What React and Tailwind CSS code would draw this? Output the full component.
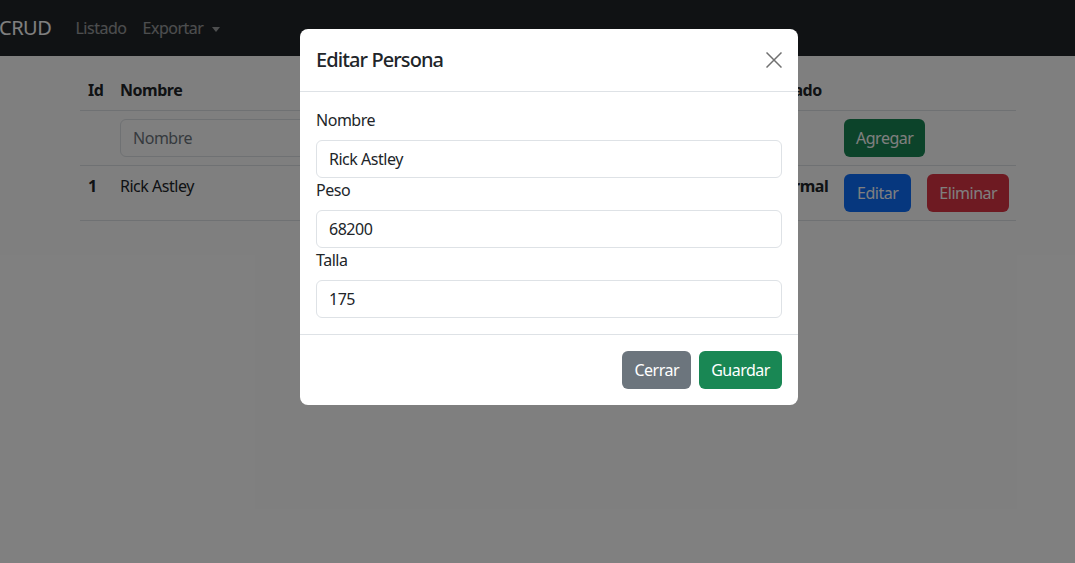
import React from "react";

const font = { fontFamily: '"Noto Sans", "Open Sans", sans-serif', letterSpacing: "-0.03em" };

const Field = ({ label, value }) => (
  <div>
    <label className="block mb-2 leading-6 text-[16px] text-[#212529]">{label}</label>
    <input
      readOnly
      value={value}
      className="block w-full h-[38px] px-3 rounded-md border border-[#dee2e6] text-[16px] text-[#212529] bg-white outline-none"
    />
  </div>
);

export default function App() {
  return (
    <div className="relative w-[1075px] h-[563px] overflow-hidden bg-white text-[#212529]" style={font}>
      {/* Navbar */}
      <nav className="h-14 bg-[#212529] flex items-center">
        <span className="text-[20px] text-white leading-[30px] mr-6 -ml-[1px]">CRUD</span>
        <div className="flex items-center gap-4 text-[16px] text-white/55">
          <span>Listado</span>
          <span className="flex items-center gap-2">
            Exportar
            <span className="w-0 h-0 border-x-[4px] border-x-transparent border-t-[5px] border-t-white/55 mt-[2px]" />
          </span>
        </div>
      </nav>

      {/* Table */}
      <div className="pl-20 pr-[59px] pt-[14px]">
        <table className="w-full table-fixed border-collapse text-[16px]">
          <colgroup>
            <col className="w-[32px]" />
            <col className="w-[240px]" />
            <col className="w-[160px]" />
            <col className="w-[160px]" />
            <col className="w-[91px]" />
            <col className="w-[73px]" />
            <col />
          </colgroup>
          <thead>
            <tr className="border-b border-[#dee2e6] text-left align-top">
              <th className="p-2 font-bold">Id</th>
              <th className="p-2 font-bold">Nombre</th>
              <th className="p-2 font-bold">Peso</th>
              <th className="p-2 font-bold">Talla</th>
              <th className="p-2 font-bold">IMC</th>
              <th className="p-2 font-bold">Estado</th>
              <th className="p-2"></th>
            </tr>
          </thead>
          <tbody>
            <tr className="border-b border-[#dee2e6] align-top">
              <td className="p-2"></td>
              <td className="p-2">
                <input
                  readOnly
                  placeholder="Nombre"
                  className="w-full h-[38px] px-3 rounded-md border border-[#dee2e6] placeholder:text-[#6c757d] outline-none"
                />
              </td>
              <td className="p-2">
                <input readOnly placeholder="Peso" className="w-full h-[38px] px-3 rounded-md border border-[#dee2e6] outline-none" />
              </td>
              <td className="p-2">
                <input readOnly placeholder="Talla" className="w-full h-[38px] px-3 rounded-md border border-[#dee2e6] outline-none" />
              </td>
              <td className="p-2"></td>
              <td className="p-2"></td>
              <td className="p-2">
                <button className="h-[38px] px-3 rounded-md bg-[#198754] text-white">Agregar</button>
              </td>
            </tr>
            <tr className="border-b border-[#dee2e6] align-top">
              <th className="p-2 text-left font-bold leading-6">1</th>
              <td className="p-2 leading-6">Rick Astley</td>
              <td className="p-2 leading-6">68200</td>
              <td className="p-2 leading-6">175</td>
              <td className="p-2 leading-6">22.27</td>
              <td className="p-2 leading-6 font-bold">Normal</td>
              <td className="p-2">
                <div className="flex gap-4">
                  <button className="h-[38px] px-[13px] rounded-md bg-[#0d6efd] text-white">Editar</button>
                  <button className="h-[38px] px-3 rounded-md bg-[#dc3545] text-white">Eliminar</button>
                </div>
              </td>
            </tr>
          </tbody>
        </table>
      </div>

      {/* Backdrop */}
      <div className="absolute inset-0 bg-black/50" />

      {/* Modal */}
      <div className="absolute left-[300px] top-[29px] w-[498px] bg-white rounded-lg flex flex-col">
        <div className="flex items-center justify-between p-4 border-b border-[#dee2e6]">
          <h5 className="text-[20px] font-medium leading-[30px] tracking-[-0.045em]">Editar Persona</h5>
          <button className="w-4 h-4 flex items-center justify-center">
            <svg width="16" height="16" viewBox="0 0 16 16" fill="none" stroke="#707070" strokeWidth="1.5">
              <path d="M0.5 0.5 15.5 15.5M15.5 0.5 0.5 15.5" />
            </svg>
          </button>
        </div>
        <div className="p-4 flex flex-col">
          <Field label="Nombre" value="Rick Astley" />
          <Field label="Peso" value="68200" />
          <Field label="Talla" value="175" />
        </div>
        <div className="flex justify-end gap-2 p-4 border-t border-[#dee2e6]">
          <button className="h-[38px] px-3 rounded-md bg-[#6c757d] text-white text-[16px]">Cerrar</button>
          <button className="h-[38px] px-3 rounded-md bg-[#198754] text-white text-[16px]">Guardar</button>
        </div>
      </div>
    </div>
  );
}
